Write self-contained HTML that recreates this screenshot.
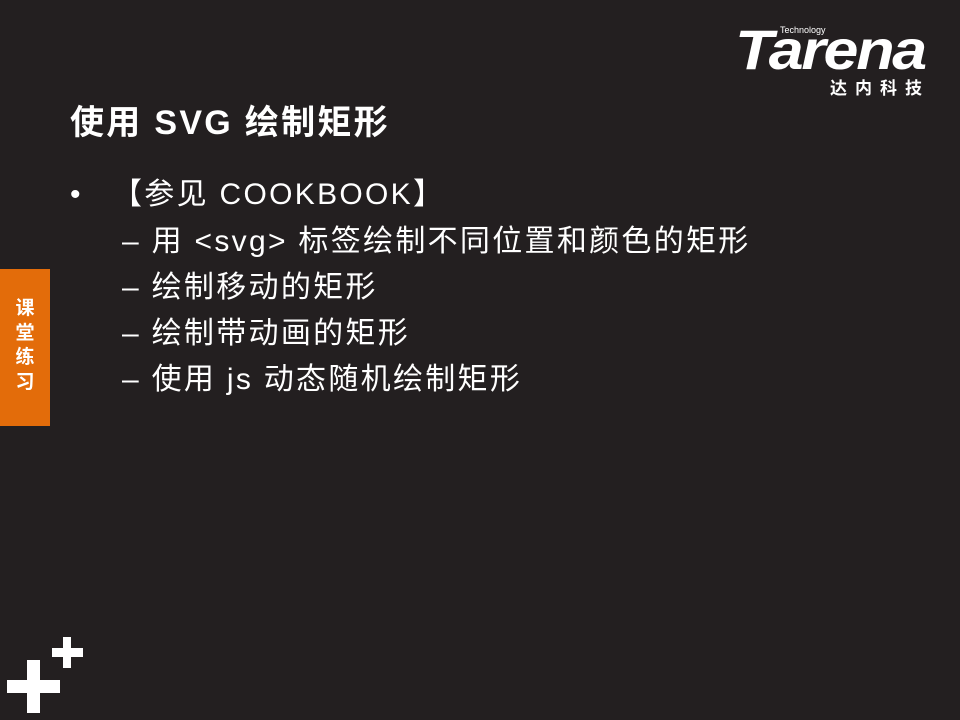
<!DOCTYPE html>
<html><head><meta charset="utf-8"><style>
body{margin:0;width:960px;height:720px;background:#231f20;position:relative;overflow:hidden;font-family:"Liberation Sans","Noto Sans CJK SC",sans-serif;color:#fff}
.a{position:absolute;white-space:nowrap}
.t{left:70px;top:95px;font-size:34px;font-weight:bold;letter-spacing:2.3px}
.l{font-size:30px;line-height:36px;letter-spacing:2.3px}
.w{background:#fff;position:absolute}
</style></head><body>
<div class="a t">使用 SVG 绘制矩形</div>
<div class="a l" style="left:70px;top:177px">•</div>
<div class="a l" style="left:112px;top:177px">【参见 COOKBOOK】</div>
<div class="a l" style="left:122px;top:224px">– 用 &lt;svg&gt; 标签绘制不同位置和颜色的矩形</div>
<div class="a l" style="left:122px;top:270px">– 绘制移动的矩形</div>
<div class="a l" style="left:122px;top:316px">– 绘制带动画的矩形</div>
<div class="a l" style="left:122px;top:362px">– 使用 js 动态随机绘制矩形</div>
<div class="a" style="left:0;top:269px;width:50px;height:157px;background:#e36c0a"></div>
<div class="a" style="left:13px;top:297px;width:24px;font-size:19px;font-weight:bold;line-height:24.5px;text-align:center">课<br>堂<br>练<br>习</div>
<div class="a" style="left:735px;top:20px;font-size:56px;font-weight:bold;font-style:italic;letter-spacing:-2px;line-height:60px;transform:scaleX(1.12);transform-origin:left top">Tarena</div>
<div class="a" style="left:780px;top:25px;font-size:9px">Technology</div>
<div class="a" style="left:830px;top:74px;font-size:17px;font-weight:bold;letter-spacing:8px">达内科技</div>
<div class="w" style="left:7px;top:680px;width:53px;height:13px"></div>
<div class="w" style="left:27px;top:660px;width:13px;height:53px"></div>
<div class="w" style="left:52px;top:648px;width:31px;height:9px"></div>
<div class="w" style="left:63px;top:637px;width:8px;height:31px"></div>
</body></html>
